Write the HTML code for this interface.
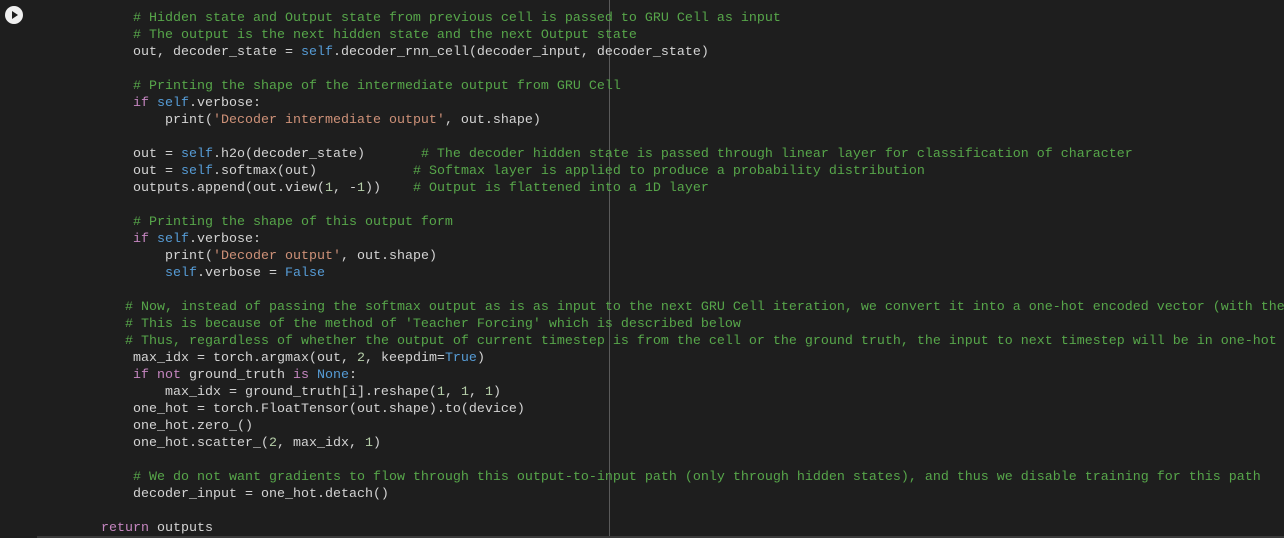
<!DOCTYPE html>
<html><head><style>
body{margin:0;width:1284px;height:538px;background:#1e1e1e;overflow:hidden;position:relative}
pre{position:absolute;left:101px;top:10px;margin:0;font-family:"Liberation Mono","Courier New",monospace;font-size:13.33px;line-height:17px;color:#d4d4d4;white-space:pre}
.c{color:#57a64a}.k{color:#c586c0}.s{color:#569cd6}.t{color:#ce9178}.n{color:#b5cea8}
.vl{position:absolute;left:609px;top:0;width:1px;height:538px;background:#5a5a5a}
.bl{position:absolute;left:37px;top:536px;width:1247px;height:2px;background:#3a3a3a}
.run{position:absolute;left:5px;top:6px;width:18px;height:18px;border-radius:50%;background:#f0f0f0}
.run:after{content:"";position:absolute;left:7px;top:5px;border-left:6px solid #1e1e1e;border-top:4px solid transparent;border-bottom:4px solid transparent}
</style></head><body>
<div class="run"></div>
<div class="vl"></div>
<div class="bl"></div>
<pre>    <span class="c"># Hidden state and Output state from previous cell is passed to GRU Cell as input</span>
    <span class="c"># The output is the next hidden state and the next Output state</span>
    out, decoder_state = <span class="s">self</span>.decoder_rnn_cell(decoder_input, decoder_state)

    <span class="c"># Printing the shape of the intermediate output from GRU Cell</span>
    <span class="k">if</span> <span class="s">self</span>.verbose:
        print(<span class="t">'Decoder intermediate output'</span>, out.shape)

    out = <span class="s">self</span>.h2o(decoder_state)       <span class="c"># The decoder hidden state is passed through linear layer for classification of character</span>
    out = <span class="s">self</span>.softmax(out)            <span class="c"># Softmax layer is applied to produce a probability distribution</span>
    outputs.append(out.view(<span class="n">1</span>, -<span class="n">1</span>))    <span class="c"># Output is flattened into a 1D layer</span>

    <span class="c"># Printing the shape of this output form</span>
    <span class="k">if</span> <span class="s">self</span>.verbose:
        print(<span class="t">'Decoder output'</span>, out.shape)
        <span class="s">self</span>.verbose = <span class="s">False</span>

   <span class="c"># Now, instead of passing the softmax output as is as input to the next GRU Cell iteration, we convert it into a one-hot encoded vector (with the</span>
   <span class="c"># This is because of the method of 'Teacher Forcing' which is described below</span>
   <span class="c"># Thus, regardless of whether the output of current timestep is from the cell or the ground truth, the input to next timestep will be in one-hot</span>
    max_idx = torch.argmax(out, <span class="n">2</span>, keepdim=<span class="s">True</span>)
    <span class="k">if</span> <span class="k">not</span> ground_truth <span class="k">is</span> <span class="s">None</span>:
        max_idx = ground_truth[i].reshape(<span class="n">1</span>, <span class="n">1</span>, <span class="n">1</span>)
    one_hot = torch.FloatTensor(out.shape).to(device)
    one_hot.zero_()
    one_hot.scatter_(<span class="n">2</span>, max_idx, <span class="n">1</span>)

    <span class="c"># We do not want gradients to flow through this output-to-input path (only through hidden states), and thus we disable training for this path</span>
    decoder_input = one_hot.detach()

<span class="k">return</span> outputs</pre>
</body></html>
